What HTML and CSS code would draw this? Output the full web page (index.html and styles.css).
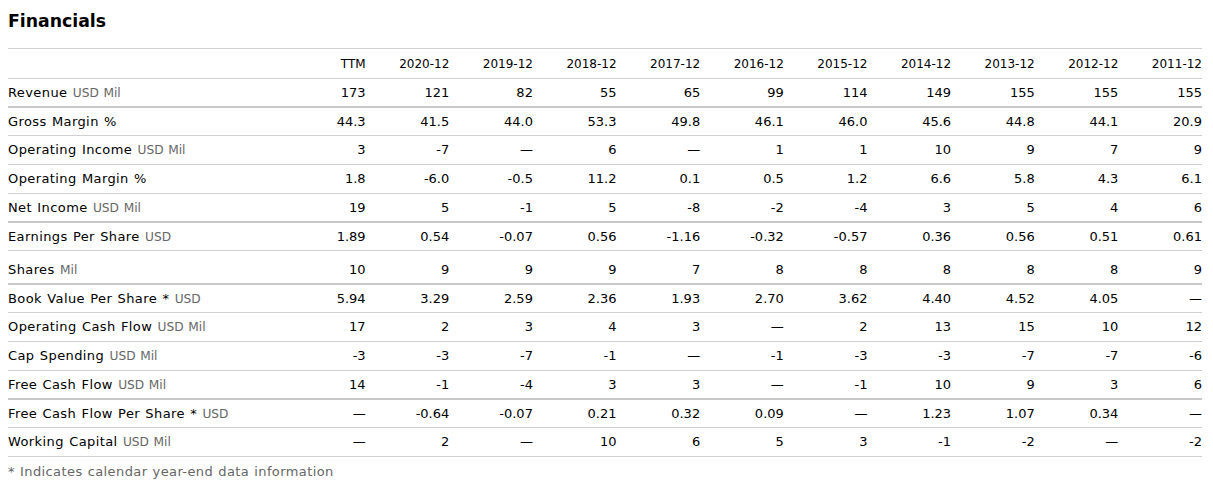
FILE: index.html
```html
<!DOCTYPE html>
<html>
<head>
<meta charset="utf-8">
<link rel="stylesheet" href="styles.css">
</head>
<body>
<div class="page">
  <h2 class="title">Financials</h2>
  <div class="fin">
    <div class="row head">
      <div class="lbl"></div>
      <div>TTM</div><div>2020-12</div><div>2019-12</div><div>2018-12</div><div>2017-12</div><div>2016-12</div><div>2015-12</div><div>2014-12</div><div>2013-12</div><div>2012-12</div><div>2011-12</div>
    </div>
    <div class="row thick">
      <div class="lbl">Revenue <span class="u">USD Mil</span></div>
      <div>173</div><div>121</div><div>82</div><div>55</div><div>65</div><div>99</div><div>114</div><div>149</div><div>155</div><div>155</div><div>155</div>
    </div>
    <div class="row short">
      <div class="lbl">Gross Margin %</div>
      <div>44.3</div><div>41.5</div><div>44.0</div><div>53.3</div><div>49.8</div><div>46.1</div><div>46.0</div><div>45.6</div><div>44.8</div><div>44.1</div><div>20.9</div>
    </div>
    <div class="row">
      <div class="lbl">Operating Income <span class="u">USD Mil</span></div>
      <div>3</div><div>-7</div><div>—</div><div>6</div><div>—</div><div>1</div><div>1</div><div>10</div><div>9</div><div>7</div><div>9</div>
    </div>
    <div class="row">
      <div class="lbl">Operating Margin %</div>
      <div>1.8</div><div>-6.0</div><div>-0.5</div><div>11.2</div><div>0.1</div><div>0.5</div><div>1.2</div><div>6.6</div><div>5.8</div><div>4.3</div><div>6.1</div>
    </div>
    <div class="row thick">
      <div class="lbl">Net Income <span class="u">USD Mil</span></div>
      <div>19</div><div>5</div><div>-1</div><div>5</div><div>-8</div><div>-2</div><div>-4</div><div>3</div><div>5</div><div>4</div><div>6</div>
    </div>
    <div class="row short">
      <div class="lbl">Earnings Per Share <span class="u">USD</span></div>
      <div>1.89</div><div>0.54</div><div>-0.07</div><div>0.56</div><div>-1.16</div><div>-0.32</div><div>-0.57</div><div>0.36</div><div>0.56</div><div>0.51</div><div>0.61</div>
    </div>
    <div class="row thick tall">
      <div class="lbl">Shares <span class="u">Mil</span></div>
      <div>10</div><div>9</div><div>9</div><div>9</div><div>7</div><div>8</div><div>8</div><div>8</div><div>8</div><div>8</div><div>9</div>
    </div>
    <div class="row short">
      <div class="lbl">Book Value Per Share * <span class="u">USD</span></div>
      <div>5.94</div><div>3.29</div><div>2.59</div><div>2.36</div><div>1.93</div><div>2.70</div><div>3.62</div><div>4.40</div><div>4.52</div><div>4.05</div><div>—</div>
    </div>
    <div class="row">
      <div class="lbl">Operating Cash Flow <span class="u">USD Mil</span></div>
      <div>17</div><div>2</div><div>3</div><div>4</div><div>3</div><div>—</div><div>2</div><div>13</div><div>15</div><div>10</div><div>12</div>
    </div>
    <div class="row">
      <div class="lbl">Cap Spending <span class="u">USD Mil</span></div>
      <div>-3</div><div>-3</div><div>-7</div><div>-1</div><div>—</div><div>-1</div><div>-3</div><div>-3</div><div>-7</div><div>-7</div><div>-6</div>
    </div>
    <div class="row thick">
      <div class="lbl">Free Cash Flow <span class="u">USD Mil</span></div>
      <div>14</div><div>-1</div><div>-4</div><div>3</div><div>3</div><div>—</div><div>-1</div><div>10</div><div>9</div><div>3</div><div>6</div>
    </div>
    <div class="row short">
      <div class="lbl">Free Cash Flow Per Share * <span class="u">USD</span></div>
      <div>—</div><div>-0.64</div><div>-0.07</div><div>0.21</div><div>0.32</div><div>0.09</div><div>—</div><div>1.23</div><div>1.07</div><div>0.34</div><div>—</div>
    </div>
    <div class="row">
      <div class="lbl">Working Capital <span class="u">USD Mil</span></div>
      <div>—</div><div>2</div><div>—</div><div>10</div><div>6</div><div>5</div><div>3</div><div>-1</div><div>-2</div><div>—</div><div>-2</div>
    </div>
  </div>
  <p class="note">* Indicates calendar year-end data information</p>
</div>
</body>
</html>
```
FILE: styles.css
```css
body {
  margin: 8px;
  background: #fff;
  font-family: "DejaVu Sans", Verdana, sans-serif;
  color: #000;
}
.page {
  width: 1194px;
}
.title {
  margin: 2px 0 16px;
  font-size: 17.3px;
  line-height: 22px;
  font-weight: bold;
  color: #000;
}
.fin {
  border-top: 1px solid #d0d0d0;
}
.row {
  display: grid;
  grid-template-columns: 274px repeat(11, 1fr);
  align-items: center;
  box-sizing: border-box;
  height: 29px;
  border-bottom: 1px solid #d0d0d0;
  font-size: 13px;
  line-height: 16px;
}
.row > div {
  text-align: right;
  white-space: nowrap;
}
.row > .lbl {
  text-align: left;
  letter-spacing: 0.4px;
  word-spacing: 0.8px;
}
.row.head {
  height: 30px;
  font-size: 12px;
}
.row.thick {
  border-bottom: 2px solid #c8c8c8;
}
.row.short {
  height: 28px;
}
.row.tall {
  height: 34px;
  padding-top: 5px;
}
.u {
  font-size: 12.2px;
  color: #666;
  letter-spacing: 0;
}
.note {
  margin: 7px 0 0;
  font-size: 13px;
  line-height: 16px;
  letter-spacing: 0.4px;
  word-spacing: 0.6px;
  color: #666;
}
```
